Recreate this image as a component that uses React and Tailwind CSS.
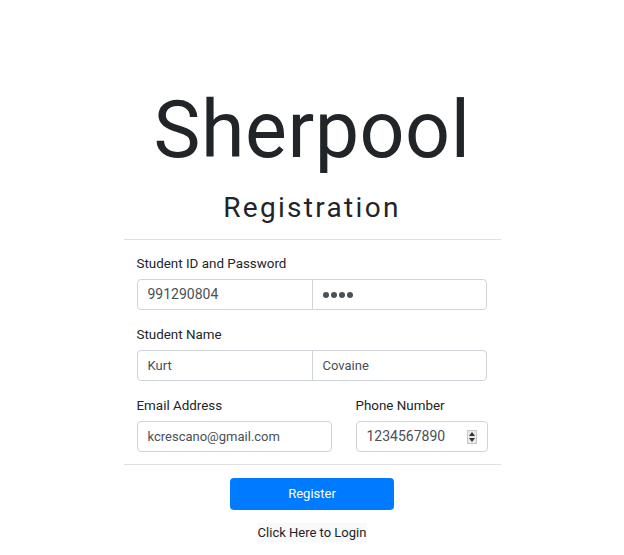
import React from "react";

const font = { fontFamily: "Roboto, 'Noto Sans', sans-serif" };

function Field({ value, className = "" }) {
  return (
    <div
      className={`h-[31px] border border-[#ced4da] bg-white flex items-center px-[10px] text-[#495057] ${className}`}
    >
      {value}
    </div>
  );
}

function Label({ children }) {
  return <div className="text-[13.4px] leading-[20px] text-[#212529] mb-[5px]">{children}</div>;
}

export default function App() {
  return (
    <div className="w-[624px] h-[555px] bg-white flex flex-col items-center" style={font}>
      <div className="mt-[90px] h-[80px] text-[79px] leading-[80px] text-[#212529] tracking-[0.5px]">
        Sherpool
      </div>
      <div className="mt-[20px] h-[36px] text-[28px] leading-[36px] text-[#212529] tracking-[2.3px]">
        Registration
      </div>
      <div className="mt-[13px] w-[377px] border-t border-[#dee2e6]" />
      <div className="w-[377px] px-[13px] pt-[14px] flex flex-col">
        <Label>Student ID and Password</Label>
        <div className="flex">
          <Field value="991290804" className="w-[176px] rounded-l-[4px] text-[14px]" />
          <div className="w-[175px] -ml-px h-[31px] border border-[#ced4da] rounded-r-[4px] flex items-center px-[10px] gap-[2px]">
            {[0, 1, 2, 3].map((i) => (
              <span key={i} className="w-[6px] h-[6px] rounded-full bg-[#495057]" />
            ))}
          </div>
        </div>
        <div className="mt-[15px]">
          <Label>Student Name</Label>
        </div>
        <div className="flex">
          <Field value="Kurt" className="w-[176px] rounded-l-[4px] text-[13px]" />
          <Field value="Covaine" className="w-[175px] -ml-px rounded-r-[4px] text-[13px]" />
        </div>
        <div className="mt-[15px] flex gap-[24px]">
          <div className="w-[195px]">
            <Label>Email Address</Label>
            <Field value="kcrescano@gmail.com" className="rounded-[4px] text-[13px]" />
          </div>
          <div className="w-[132px]">
            <Label>Phone Number</Label>
            <div className="h-[31px] border border-[#ced4da] rounded-[4px] flex items-center justify-between pl-[10px] pr-[10px] text-[14px] text-[#495057]">
              <span>1234567890</span>
              <span className="w-[10px] h-[14px] bg-[#e9e9e9] border border-[#c8c8c8] flex flex-col items-center justify-around">
                <svg width="6" height="4" viewBox="0 0 6 4"><path d="M3 0L6 4H0z" fill="#333" /></svg>
                <svg width="6" height="4" viewBox="0 0 6 4"><path d="M0 0H6L3 4z" fill="#333" /></svg>
              </span>
            </div>
          </div>
        </div>
      </div>
      <div className="mt-[12px] w-[377px] border-t border-[#dee2e6]" />
      <button className="mt-[13px] w-[164px] h-[32px] rounded-[4px] bg-[#007bff] text-white text-[13px]">
        Register
      </button>
      <div className="mt-[13px] px-[1px] h-[19px] leading-[19px] bg-[#f8f9fa] text-[13px] text-[#212529]">
        Click Here to Login
      </div>
    </div>
  );
}
